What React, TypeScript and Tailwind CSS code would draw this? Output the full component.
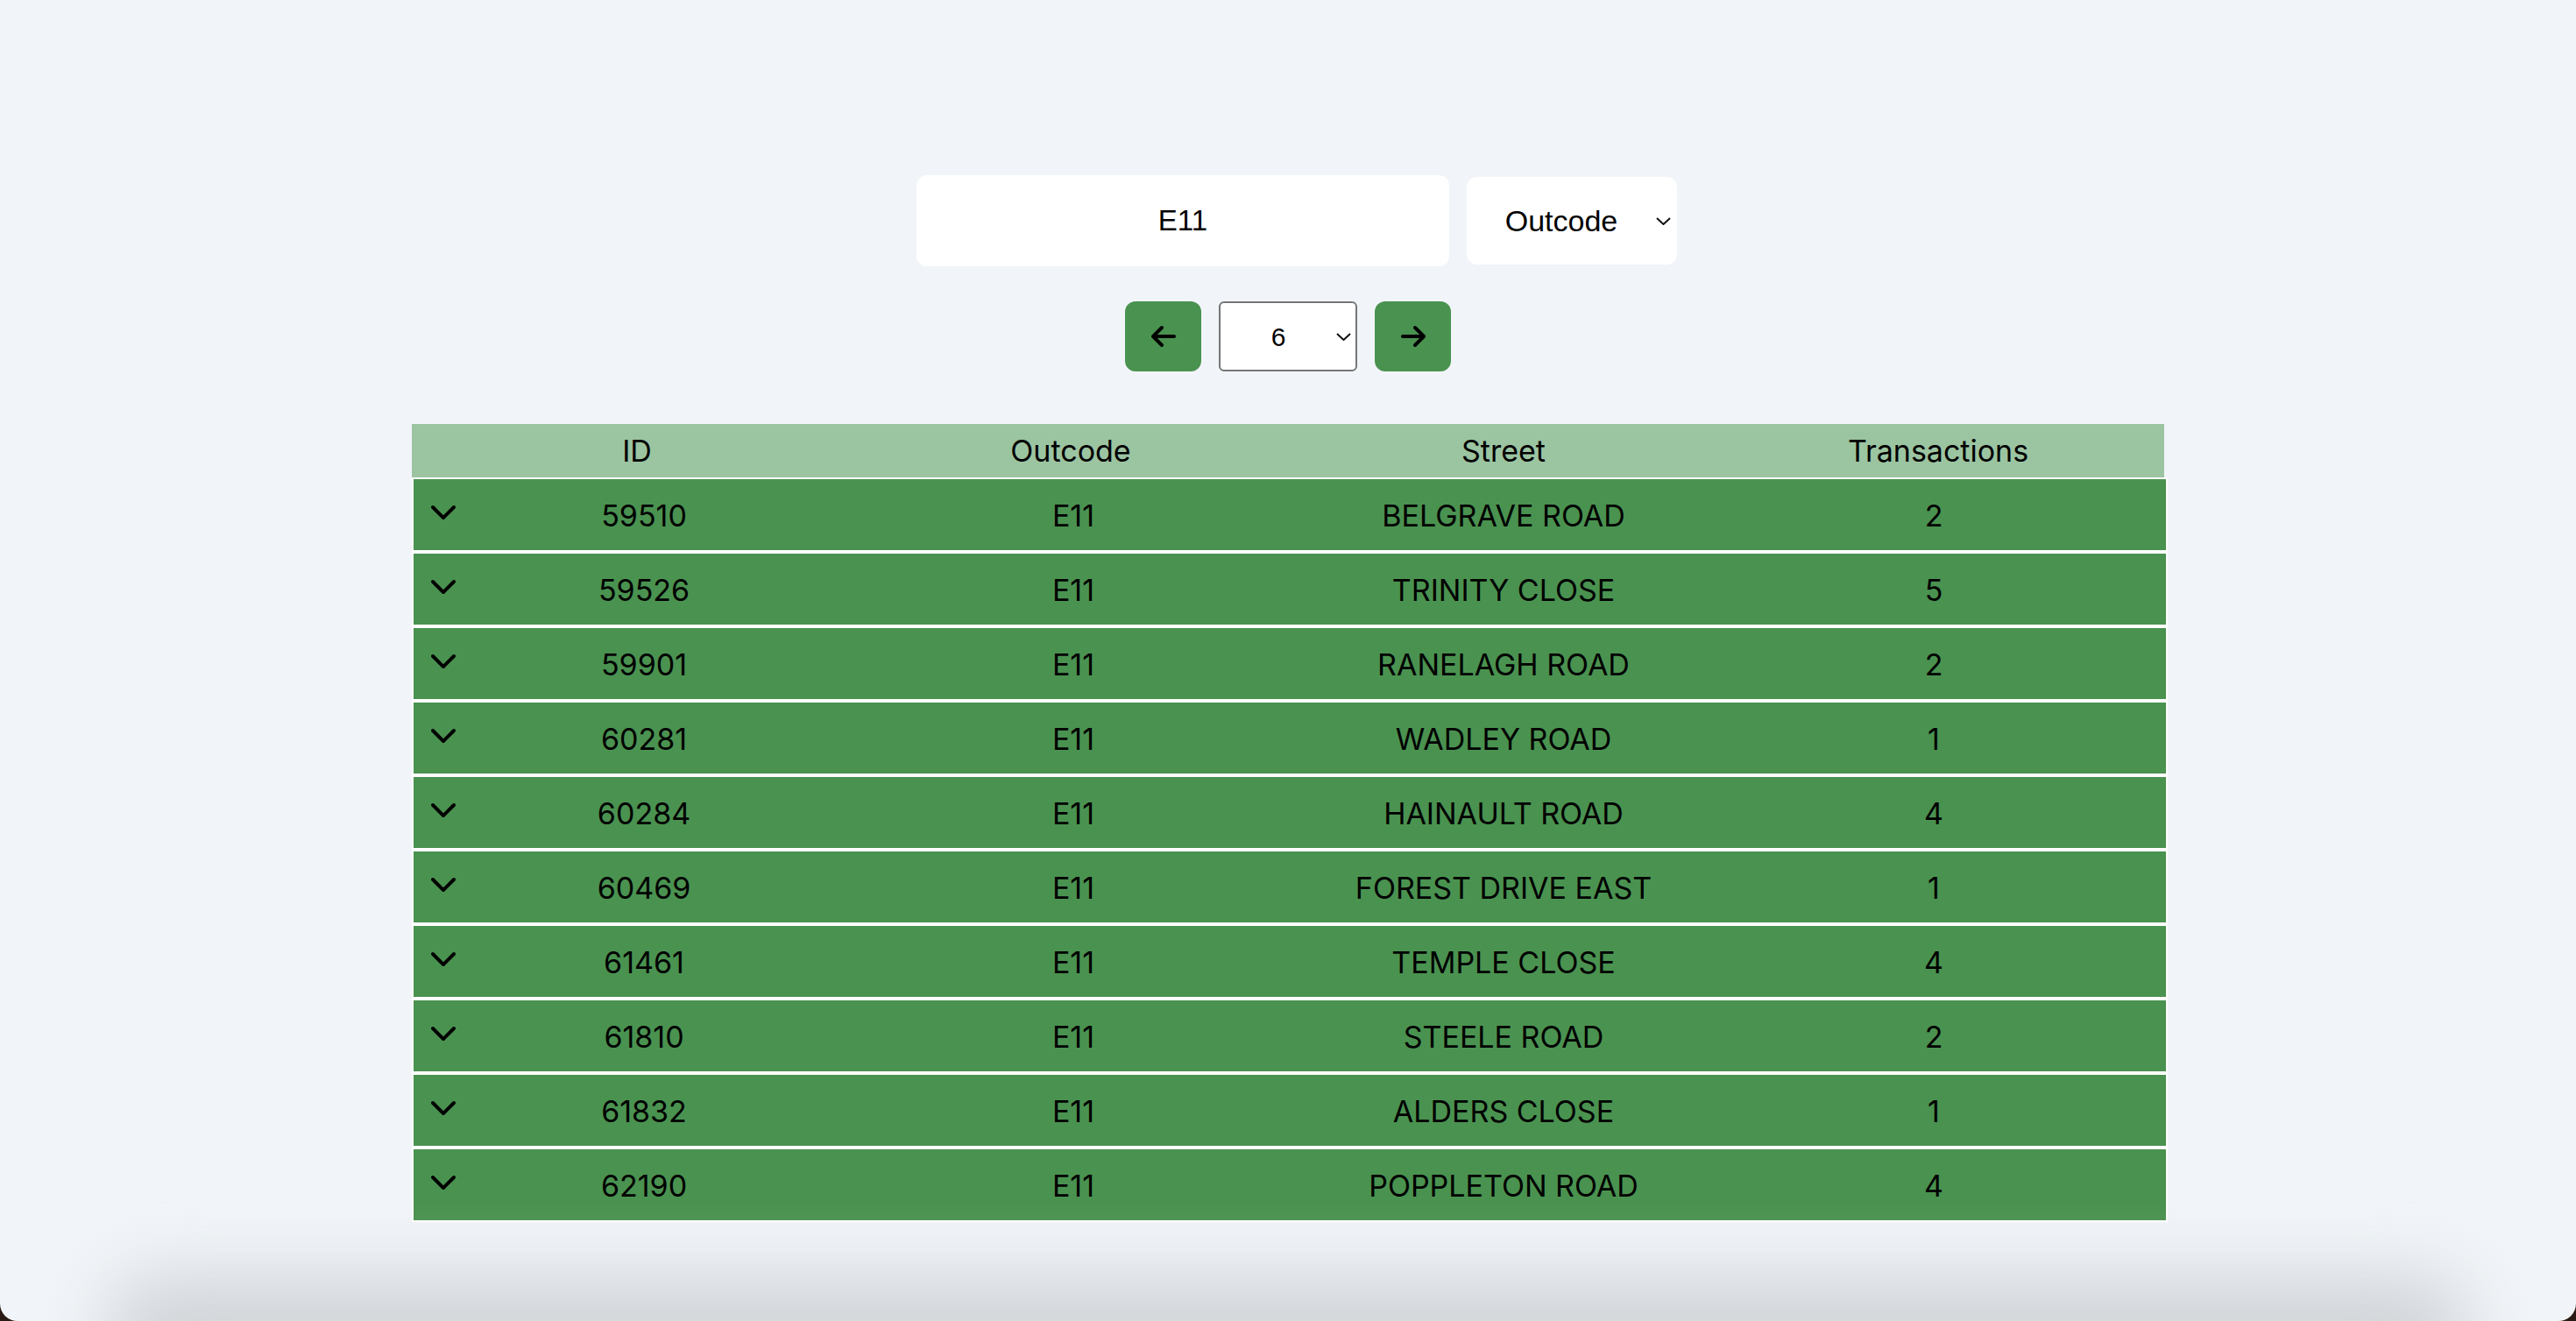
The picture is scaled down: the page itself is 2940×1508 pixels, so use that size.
import React from 'react';
import { FaArrowLeft, FaArrowRight, FaChevronDown } from 'react-icons/fa6';

const rows = [
  { id: 59510, outcode: 'E11', street: 'BELGRAVE ROAD', transactions: 2 },
  { id: 59526, outcode: 'E11', street: 'TRINITY CLOSE', transactions: 5 },
  { id: 59901, outcode: 'E11', street: 'RANELAGH ROAD', transactions: 2 },
  { id: 60281, outcode: 'E11', street: 'WADLEY ROAD', transactions: 1 },
  { id: 60284, outcode: 'E11', street: 'HAINAULT ROAD', transactions: 4 },
  { id: 60469, outcode: 'E11', street: 'FOREST DRIVE EAST', transactions: 1 },
  { id: 61461, outcode: 'E11', street: 'TEMPLE CLOSE', transactions: 4 },
  { id: 61810, outcode: 'E11', street: 'STEELE ROAD', transactions: 2 },
  { id: 61832, outcode: 'E11', street: 'ALDERS CLOSE', transactions: 1 },
  { id: 62190, outcode: 'E11', street: 'POPPLETON ROAD', transactions: 4 },
];

const SmallChevron = ({ className }: { className?: string }) => (
  <svg width="17" height="9" viewBox="0 0 17 9" fill="none" className={className}>
    <polyline points="1,1 8.5,8 16,1" stroke="#111" strokeWidth="2" />
  </svg>
);

const App = () => {
  return (
    <div className="bg-[#2a1a14]">
      <div className="relative h-[1508px] overflow-hidden rounded-b-[20px] bg-[#f1f5f9] pt-[200px] font-['Liberation_Sans',Arial,sans-serif] text-black">
        {/* search */}
        <div className="ml-[20px] flex items-center justify-center gap-[20px]">
          <input
            value="E11"
            readOnly
            className="h-[104px] w-[608px] rounded-[12px] bg-white text-center text-[33px] text-black outline-none"
          />
          <div className="flex h-[100px] w-[240px] items-center rounded-[12px] bg-white pr-[7px]">
            <span className="flex-1 text-center text-[34px]">Outcode</span>
            <SmallChevron />
          </div>
        </div>

        {/* pagination */}
        <div className="mt-[40px] flex items-center justify-center gap-[20px]">
          <button className="flex h-[80px] w-[87px] items-center justify-center rounded-[12px] bg-[#4a9250]">
            <FaArrowLeft size={32} color="#000" />
          </button>
          <div className="flex h-[80px] w-[158px] items-center rounded-[6px] border-2 border-[#767676] bg-white pr-[5px]">
            <span className="flex-1 text-center text-[30px]">6</span>
            <SmallChevron />
          </div>
          <button className="flex h-[80px] w-[87px] items-center justify-center rounded-[12px] bg-[#4a9250]">
            <FaArrowRight size={32} color="#000" />
          </button>
        </div>

        {/* table */}
        <div className="mx-auto mt-[60px] w-[2004px] font-['Inter',sans-serif] text-[34px]">
          <div className="ml-[2px] grid h-[61px] w-[2000px] grid-cols-[514px_476px_512px_480px_18px] items-center bg-[#9bc4a1] text-center">
            <div>ID</div>
            <div>Outcode</div>
            <div>Street</div>
            <div>Transactions</div>
            <div />
          </div>
          {rows.map((r) => (
            <div
              key={r.id}
              className="ml-[2px] grid h-[85px] w-[2004px] grid-cols-[68px_390px_590px_392px_560px] items-center border-2 border-white bg-[#4a9250] text-center"
            >
              <div className="mb-[10px] flex justify-center">
                <FaChevronDown size={32} color="#000" />
              </div>
              <div className="pt-[2px]">{r.id}</div>
              <div className="pt-[2px]">{r.outcode}</div>
              <div className="pt-[2px]">{r.street}</div>
              <div className="pl-[30px] pt-[2px]">{r.transactions}</div>
            </div>
          ))}
        </div>

        <div className="pointer-events-none absolute bottom-[-70px] left-[120px] right-[120px] h-[120px] rounded-full bg-[#d0d3d7] blur-[40px]" />
      </div>
    </div>
  );
};

export default App;
